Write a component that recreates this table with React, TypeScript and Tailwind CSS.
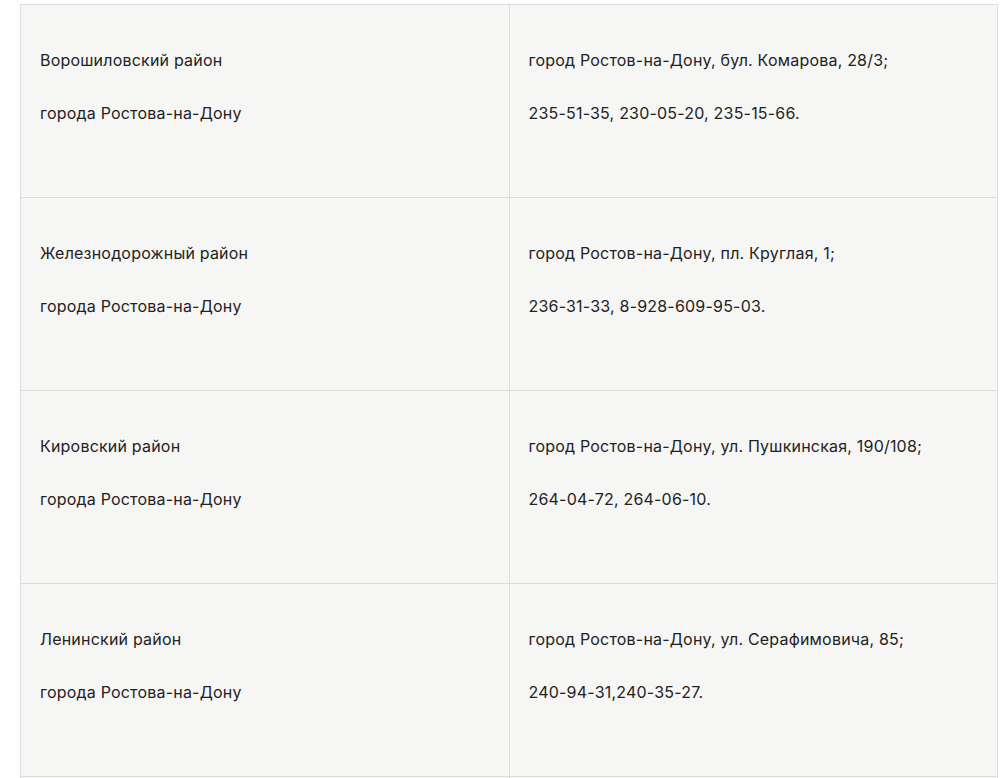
import * as React from "react";

interface Office {
  district: string;
  address: string;
  phones: string;
}

const offices: Office[] = [
  {
    district: "Ворошиловский район",
    address: "город Ростов-на-Дону, бул. Комарова, 28/3;",
    phones: "235-51-35, 230-05-20, 235-15-66.",
  },
  {
    district: "Железнодорожный район",
    address: "город Ростов-на-Дону, пл. Круглая, 1;",
    phones: "236-31-33, 8-928-609-95-03.",
  },
  {
    district: "Кировский район",
    address: "город Ростов-на-Дону, ул. Пушкинская, 190/108;",
    phones: "264-04-72, 264-06-10.",
  },
  {
    district: "Ленинский район",
    address: "город Ростов-на-Дону, ул. Серафимовича, 85;",
    phones: "240-94-31,240-35-27.",
  },
];

const Cell: React.FC<{ lines: string[] }> = ({ lines }) => (
  <td className="h-[193px] align-top border border-[#dcdcdc] bg-[#f6f6f5] pt-[43px] pl-[19px]">
    <div className="flex flex-col gap-[29px]">
      {lines.map((l) => (
        <p key={l} className="text-[16px] leading-[24px] tracking-[0.2px] text-[#222]">
          {l}
        </p>
      ))}
    </div>
  </td>
);

export default function App() {
  return (
    <div
      className="w-[1000px] h-[778px] overflow-hidden bg-white pl-[20px] pr-[2px] pt-[4px]"
      style={{ fontFamily: "Inter, 'Noto Sans', sans-serif" }}
    >
      <table className="w-full border-collapse table-fixed">
        <tbody>
          {offices.map((o) => (
            <tr key={o.district}>
              <Cell lines={[o.district, "города Ростова-на-Дону"]} />
              <Cell lines={[o.address, o.phones]} />
            </tr>
          ))}
          {/* next row continues below the fold */}
          <tr>
            <td className="h-[193px] border border-[#dcdcdc] bg-[#f6f6f5]" />
            <td className="h-[193px] border border-[#dcdcdc] bg-[#f6f6f5]" />
          </tr>
        </tbody>
      </table>
    </div>
  );
}
